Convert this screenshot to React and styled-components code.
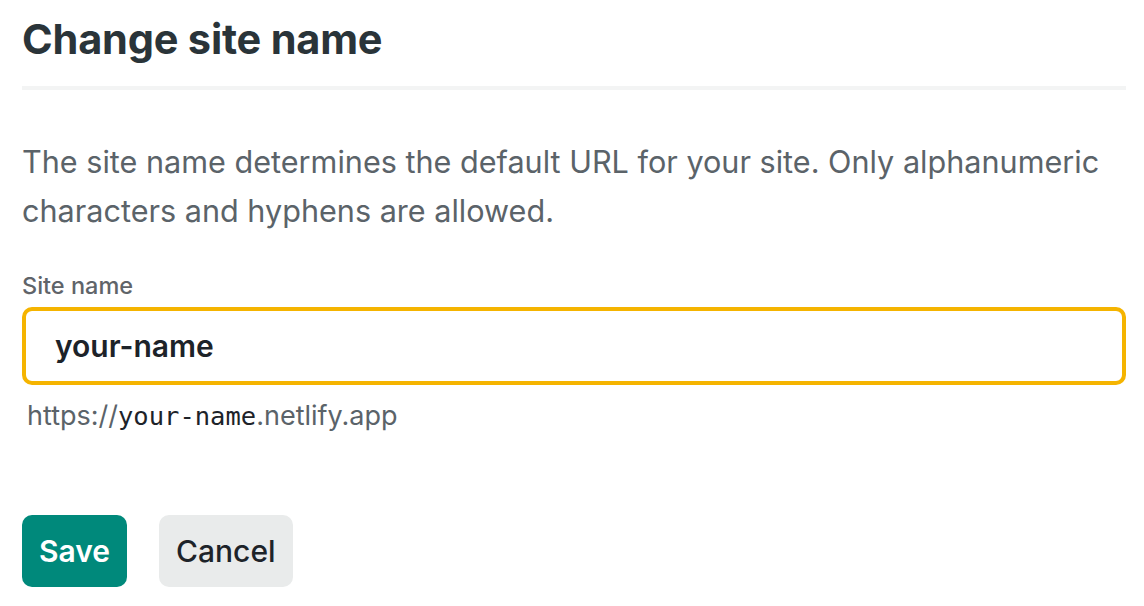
import React, { useState } from "react";
import styled, { createGlobalStyle } from "styled-components";

const GlobalStyle = createGlobalStyle`
  body {
    margin: 0;
    background: #ffffff;
    font-family: Inter, "Noto Sans", "Liberation Sans", sans-serif;
  }
`;

const Wrapper = styled.div`
  display: flex;
  flex-direction: column;
  width: 1104px;
  padding: 13px 18px 0 22px;
`;

const Title = styled.h1`
  margin: 0;
  font-size: 41.5px;
  font-weight: 700;
  line-height: 52px;
  letter-spacing: -0.2px;
  color: #2a3439;
`;

const Divider = styled.div`
  height: 4px;
  margin-top: 21px;
  background-color: #f3f4f4;
`;

const Description = styled.p`
  margin: 47px 0 0;
  font-size: 30.6px;
  font-weight: 400;
  line-height: 49px;
  color: #5b6369;
`;

const Field = styled.div`
  display: flex;
  flex-direction: column;
  margin-top: 36px;
`;

const Label = styled.label`
  font-size: 23.5px;
  font-weight: 500;
  line-height: 30px;
  color: #5f6469;
`;

const Input = styled.input`
  box-sizing: border-box;
  width: 100%;
  height: 78px;
  margin-top: 6px;
  padding: 0 29px;
  border: 4px solid #f5b400;
  border-radius: 10px;
  outline: none;
  font-family: inherit;
  font-size: 30px;
  font-weight: 600;
  color: #1d2329;
  background: #ffffff;
`;

const Hint = styled.div`
  margin-top: 14px;
  padding-left: 5px;
  font-size: 27px;
  line-height: 34px;
  color: #5b6369;
`;

const Mono = styled.span`
  font-family: "DejaVu Sans Mono", "Liberation Mono", monospace;
  font-size: 25.5px;
  color: #1d2329;
`;

const ButtonBox = styled.div`
  display: flex;
  gap: 32px;
  margin-top: 82px;
`;

const Button = styled.button`
  height: 72px;
  padding: 0 17px;
  border: none;
  border-radius: 10px;
  font-family: inherit;
  font-size: 30px;
  font-weight: ${(props) => (props.primary ? 600 : 500)};
  color: ${(props) => (props.primary ? "#ffffff" : "#1d2329")};
  background-color: ${(props) => (props.primary ? "#00897b" : "#e9ebeb")};
  cursor: pointer;
`;

const App = () => {
  const [name, setName] = useState("your-name");

  return (
    <Wrapper>
      <GlobalStyle />
      <Title>Change site name</Title>
      <Divider />
      <Description>
        The site name determines the default URL for your site. Only
        alphanumeric characters and hyphens are allowed.
      </Description>
      <Field>
        <Label htmlFor="site-name">Site name</Label>
        <Input
          id="site-name"
          value={name}
          onChange={(e) => setName(e.target.value)}
        />
        <Hint>
          https://<Mono>{name}</Mono>.netlify.app
        </Hint>
      </Field>
      <ButtonBox>
        <Button primary>Save</Button>
        <Button>Cancel</Button>
      </ButtonBox>
    </Wrapper>
  );
};

export default App;
